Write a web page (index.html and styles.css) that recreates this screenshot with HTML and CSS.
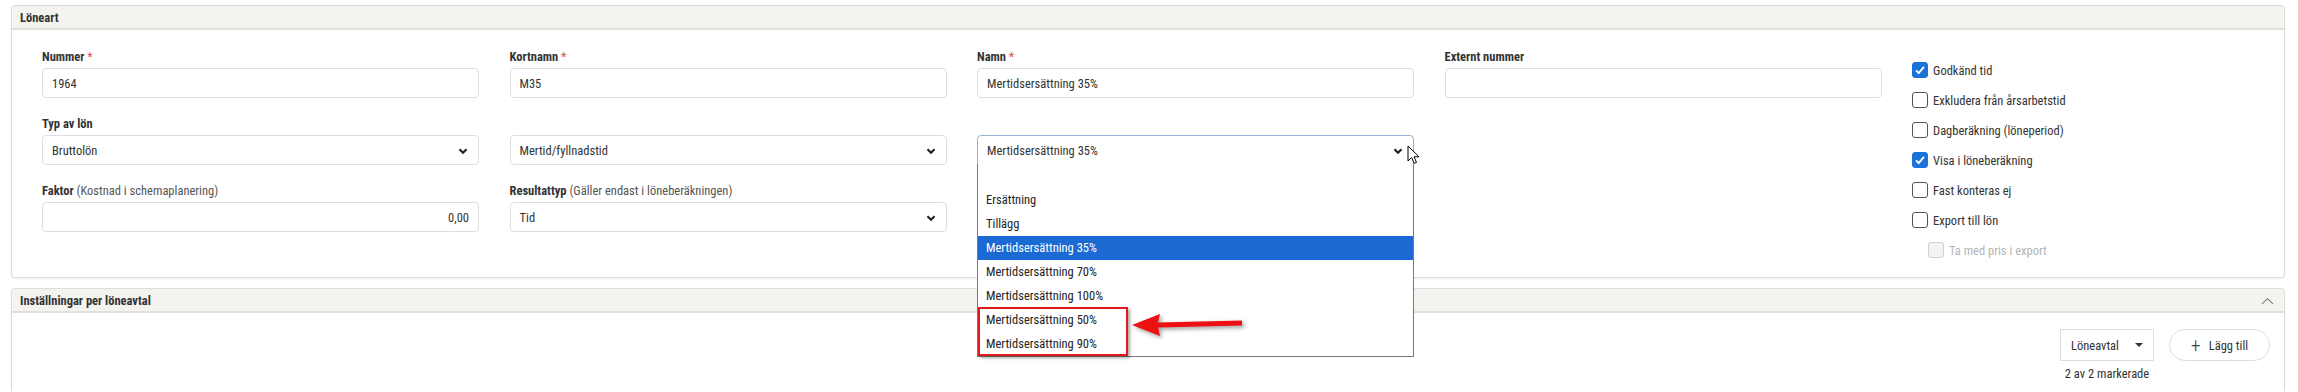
FILE: index.html
```html
<!DOCTYPE html>
<html lang="sv">
<head>
    <meta charset="UTF-8">
    <title>Löneart</title>
    <link rel="stylesheet" href="styles.css">
</head>
<body>
    <div class="page">
        <div class="panel">
            <div class="panel-head">Löneart</div>
            <div class="panel-body form-grid">
                <div class="field">
                    <label>Nummer <span class="req">*</span></label>
                    <input class="form-control" type="text" value="1964">
                </div>
                <div class="field">
                    <label>Kortnamn <span class="req">*</span></label>
                    <input class="form-control" type="text" value="M35">
                </div>
                <div class="field">
                    <label>Namn <span class="req">*</span></label>
                    <input class="form-control" type="text" value="Mertidsersättning 35%">
                </div>
                <div class="field">
                    <label>Externt nummer</label>
                    <input class="form-control" type="text" value="">
                </div>

                <div class="checks">
                    <div class="check"><span class="box checked"><svg viewBox="0 0 16 16"><path d="M3.5 8.5l3 3 6-7" /></svg></span>Godkänd tid</div>
                    <div class="check"><span class="box"></span>Exkludera från årsarbetstid</div>
                    <div class="check"><span class="box"></span>Dagberäkning (löneperiod)</div>
                    <div class="check"><span class="box checked"><svg viewBox="0 0 16 16"><path d="M3.5 8.5l3 3 6-7" /></svg></span>Visa i löneberäkning</div>
                    <div class="check"><span class="box"></span>Fast konteras ej</div>
                    <div class="check"><span class="box"></span>Export till lön</div>
                    <div class="check sub disabled"><span class="box"></span>Ta med pris i export</div>
                </div>

                <div class="field">
                    <label>Typ av lön</label>
                    <div class="form-control select">Bruttolön
                        <svg class="chev" viewBox="0 0 10 10"><path d="M1.5 3.2l3.5 3.5 3.5-3.5" /></svg>
                    </div>
                </div>
                <div class="field">
                    <label>&nbsp;</label>
                    <div class="form-control select">Mertid/fyllnadstid
                        <svg class="chev" viewBox="0 0 10 10"><path d="M1.5 3.2l3.5 3.5 3.5-3.5" /></svg>
                    </div>
                </div>
                <div class="field open">
                    <label>&nbsp;</label>
                    <div class="form-control select focused">Mertidsersättning 35%
                        <svg class="chev" viewBox="0 0 10 10"><path d="M1.5 3.2l3.5 3.5 3.5-3.5" /></svg>
                    </div>
                    <ul class="dropdown">
                        <li>&nbsp;</li>
                        <li>Ersättning</li>
                        <li>Tillägg</li>
                        <li class="active">Mertidsersättning 35%</li>
                        <li>Mertidsersättning 70%</li>
                        <li>Mertidsersättning 100%</li>
                        <li>Mertidsersättning 50%</li>
                        <li>Mertidsersättning 90%</li>
                        <div class="mark"></div>
                        <svg class="arrow" viewBox="0 0 120 32" width="120" height="32">
                            <polygon points="4,17 32,6 30,14.5 114,12.5 114,17.5 30,19.5 32,28" />
                        </svg>
                    </ul>
                    <svg class="cursor" viewBox="0 0 13 20" width="13" height="20">
                        <path d="M1 1v15l3.6-3.4 2.6 5.8 2.3-1-2.5-5.6h5z" />
                    </svg>
                </div>
                <div class="field"></div>

                <div class="field">
                    <label>Faktor <span class="hint">(Kostnad i schemaplanering)</span></label>
                    <input class="form-control right" type="text" value="0,00">
                </div>
                <div class="field">
                    <label>Resultattyp <span class="hint">(Gäller endast i löneberäkningen)</span></label>
                    <div class="form-control select">Tid
                        <svg class="chev" viewBox="0 0 10 10"><path d="M1.5 3.2l3.5 3.5 3.5-3.5" /></svg>
                    </div>
                </div>
            </div>
        </div>

        <div class="panel second">
            <div class="panel-head">Inställningar per löneavtal
                <svg class="collapse" viewBox="0 0 14 8"><path d="M1 7l6-5.5 6 5.5" /></svg>
            </div>
            <div class="panel-body toolbar">
                <div class="filter">
                    <div class="filter-btn">Löneavtal <span class="caret"></span></div>
                    <div class="count">2 av 2 markerade</div>
                </div>
                <button class="add-btn"><span class="plus">+</span> Lägg till</button>
            </div>
        </div>
    </div>
</body>
</html>
```

FILE: styles.css
```css
body {
    margin: 0;
    padding: 0;
    font-family: "Roboto Condensed", "Liberation Sans Narrow", Roboto, sans-serif;
    font-stretch: condensed;
    font-size: 12.5px;
    color: #333;
    background-color: #fff;
}
.page {
    padding: 5px 13px 0 11px;
}
.panel {
    border: 1px solid #dcdcdc;
    border-radius: 4px;
    background-color: #fff;
    box-shadow: 0 1px 2px rgba(0, 0, 0, 0.08);
}
.panel.second {
    margin-top: 10px;
    border-bottom: none;
    border-radius: 4px 4px 0 0;
}
.panel-head {
    position: relative;
    height: 22px;
    padding: 0 8px;
    display: flex;
    align-items: center;
    background-color: #f5f3ef;
    border-bottom: 2px solid #e2e0dc;
    border-radius: 4px 4px 0 0;
    font-weight: bold;
    color: #333;
}
.collapse {
    position: absolute;
    right: 10px;
    top: 8px;
    width: 13px;
    height: 8px;
    fill: none;
    stroke: #777;
    stroke-width: 1.1;
}
.form-grid {
    display: grid;
    grid-template-columns: repeat(4, 437px) 1fr;
    grid-template-rows: auto auto 1fr;
    column-gap: 30.5px;
    row-gap: 18px;
    padding: 19px 14px 12px 30px;
    align-items: start;
}
.field {
    position: relative;
}
.field label {
    display: block;
    height: 16px;
    line-height: 16px;
    margin-bottom: 3px;
    font-weight: bold;
    color: #333;
}
.req {
    color: #d9534f;
    font-weight: normal;
}
.hint {
    font-weight: normal;
    color: #555;
}
.form-control {
    box-sizing: border-box;
    width: 100%;
    height: 30px;
    padding: 0 9px;
    border: 1px solid #dedede;
    border-radius: 4px;
    background-color: #fff;
    font: inherit;
    color: #333;
    outline: none;
    display: block;
}
.form-control.right {
    text-align: right;
}
.select {
    position: relative;
    display: flex;
    align-items: center;
}
.select.focused {
    border-color: #93b3d8;
    border-radius: 4px 4px 0 0;
}
.chev {
    position: absolute;
    right: 10px;
    top: 10px;
    width: 10px;
    height: 10px;
    fill: none;
    stroke: #222;
    stroke-width: 2.2;
}
.checks {
    grid-column: 5;
    grid-row: 1 / span 3;
    padding-top: 6px;
}
.check {
    height: 30px;
    display: flex;
    align-items: center;
    color: #333;
}
.check.sub {
    padding-left: 16px;
}
.check.disabled {
    color: #b5b5b5;
}
.box {
    box-sizing: border-box;
    width: 16px;
    height: 16px;
    margin-right: 5px;
    border: 1px solid #555;
    border-radius: 3px;
    background-color: #fff;
}
.box.checked {
    background-color: #1a73d9;
    border-color: #1a73d9;
}
.box svg {
    display: block;
    width: 14px;
    height: 14px;
    fill: none;
    stroke: #fff;
    stroke-width: 2.2;
}
.disabled .box {
    border-color: #d0d0d0;
    background-color: #f4f4f4;
}
.dropdown {
    position: absolute;
    top: 48px;
    left: 0;
    right: 0;
    margin: 0;
    padding: 0;
    list-style: none;
    background-color: #fff;
    border: 1px solid #7a7a7a;
    border-top: none;
    z-index: 5;
}
.dropdown li {
    height: 24px;
    line-height: 24px;
    padding-left: 8px;
    color: #222;
}
.dropdown li.active {
    background-color: #1b69d3;
    color: #fff;
}
.mark {
    position: absolute;
    left: 0;
    top: 143px;
    width: 150px;
    height: 49px;
    box-sizing: border-box;
    border: 2.5px solid #e3161b;
    box-shadow: 2px 2px 3px rgba(0, 0, 0, 0.35);
}
.arrow {
    position: absolute;
    left: 150px;
    top: 144px;
    fill: #ee1111;
    filter: drop-shadow(2px 2px 2px rgba(0, 0, 0, 0.4));
}
.cursor {
    position: absolute;
    left: 430px;
    top: 29px;
    fill: #fff;
    stroke: #000;
    stroke-width: 1;
    z-index: 6;
}
.toolbar {
    display: flex;
    justify-content: flex-end;
    align-items: flex-start;
    gap: 15px;
    padding: 16px 14px 0 0;
    height: 62px;
}
.filter {
    display: flex;
    flex-direction: column;
    align-items: center;
}
.filter-btn {
    box-sizing: border-box;
    width: 94px;
    height: 32px;
    padding: 0 10px;
    border: 1px solid #dedede;
    display: flex;
    align-items: center;
    justify-content: space-between;
    color: #333;
}
.caret {
    width: 0;
    height: 0;
    border-left: 4px solid transparent;
    border-right: 4px solid transparent;
    border-top: 4px solid #333;
}
.count {
    margin-top: 5px;
    color: #333;
}
.add-btn {
    box-sizing: border-box;
    width: 101px;
    height: 32px;
    border: 1px solid #dedede;
    border-radius: 16px;
    background-color: #fff;
    font: inherit;
    color: #333;
    display: flex;
    align-items: center;
    justify-content: center;
    gap: 8px;
}
.plus {
    font-size: 20px;
    font-weight: 300;
    line-height: 1;
    color: #444;
}
```
